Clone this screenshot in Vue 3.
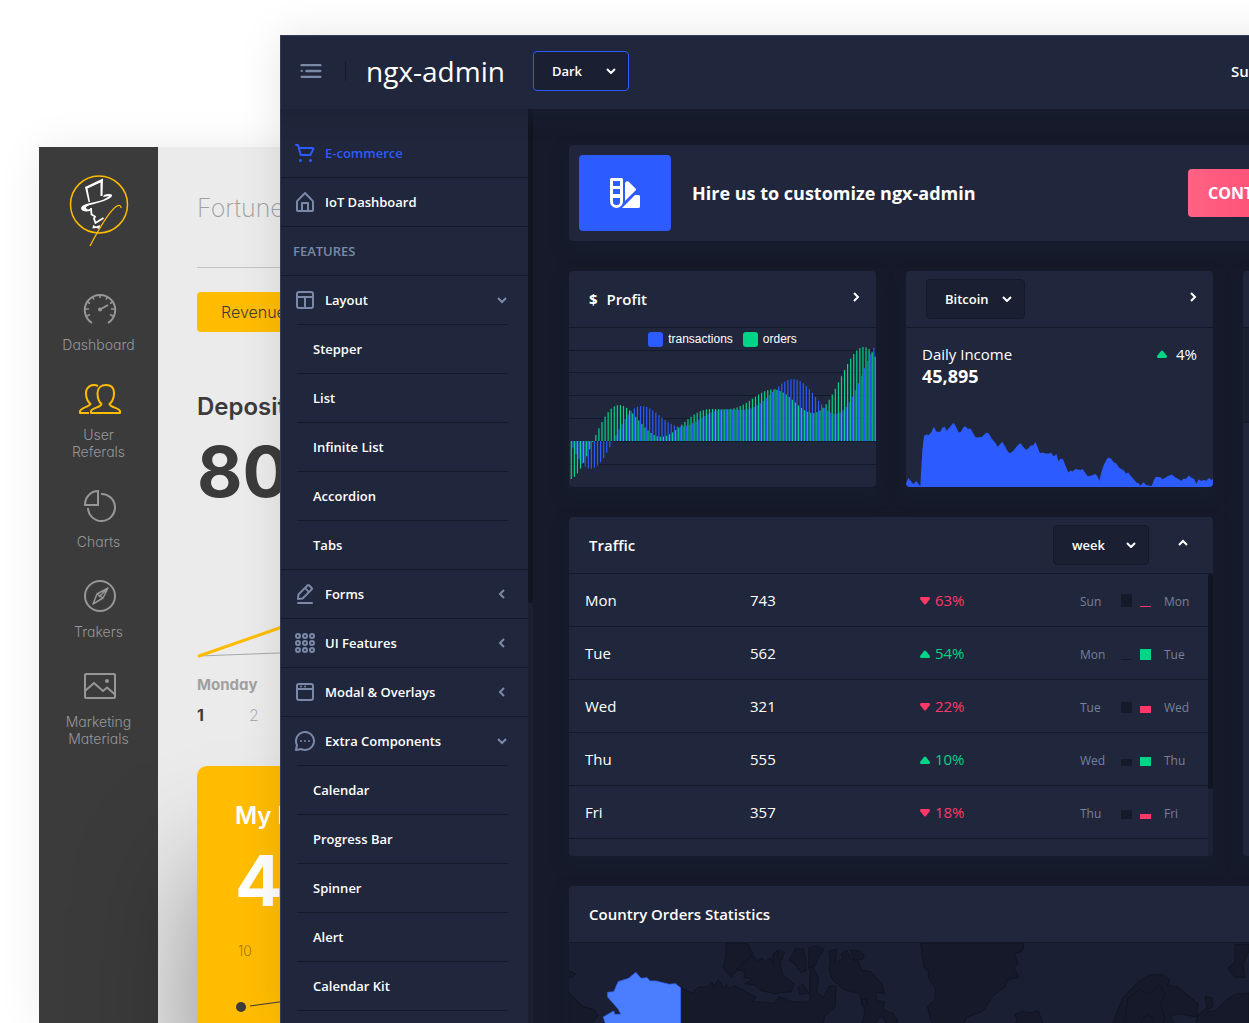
<script setup>
import { ref } from 'vue'

const theme = ref('Dark')
const currency = ref('Bitcoin')
const period = ref('week')

const menu = [
  { label: 'E-commerce', icon: 'cart', active: true },
  { label: 'IoT Dashboard', icon: 'home' },
  { label: 'FEATURES', group: true },
  { label: 'Layout', icon: 'layout', children: ['Stepper', 'List', 'Infinite List', 'Accordion', 'Tabs'] },
  { label: 'Forms', icon: 'edit', collapsed: true },
  { label: 'UI Features', icon: 'keypad', collapsed: true },
  { label: 'Modal & Overlays', icon: 'browser', collapsed: true },
  {
    label: 'Extra Components',
    icon: 'message',
    children: ['Calendar', 'Progress Bar', 'Spinner', 'Alert', 'Calendar Kit', 'Chat'],
  },
]

const traffic = [
  { day: 'Mon', value: 743, delta: 63, up: false, prev: 'Sun', a: 13, b: 1 },
  { day: 'Tue', value: 562, delta: 54, up: true, prev: 'Mon', a: 1, b: 11 },
  { day: 'Wed', value: 321, delta: 22, up: false, prev: 'Tue', a: 11, b: 7 },
  { day: 'Thu', value: 555, delta: 10, up: true, prev: 'Wed', a: 7, b: 9 },
  { day: 'Fri', value: 357, delta: 18, up: false, prev: 'Thu', a: 9, b: 5 },
]

const zero = 113
const unit = 0.76
const band = 3.07
const barWidth = 1.2
const wave = (fn, i) => (fn(i / 5) * (i / 5 - 10) + i / 6) * 5 * unit
const series = (fn, shift) =>
  Array.from({ length: 100 }, (_, i) => {
    const v = wave(fn, i)
    return { x: i * band + shift, y: v > 0 ? zero - v : zero, h: Math.abs(v) }
  })
const transactions = series(Math.sin, 0.3)
const orders = series(Math.cos, 1.7)
const gridLines = [22, 44, 67, 90, 113, 136]
</script>

<template>
  <div class="stage">
    <section class="back">
      <nav class="back-nav">
        <svg class="logo" width="60" height="72" viewBox="0 0 60 72" fill="none">
          <circle cx="30" cy="29.500" r="28.500" stroke="#ffbc00" stroke-width="1.500" />
          <path d="M16 12 34 3.500l-.5 17.500h-2V7.500L18.500 13.500 21 27h-1.500Z" fill="#fff" />
          <path d="M35 20c5-2 9-1 8 1-2 4-14 7-22 9-4 1-5 3-3 4 1 1 3 0 5-1l-2 3c-5 1-9 0-9-3 1-4 10-5 18-7 5-1 9-4 10-5-2 0-4 1-6 1Z" fill="#fff" />
          <path d="m22 33 .5 6.500 3.500 2-1 2 1.500 4.500 8-5" stroke="#fff" stroke-width="1.800" />
          <path d="m24 50 3 1.500 4-1.500-.5 4-3-1-4 .5Z" fill="#fff" />
          <path d="M21 71C33 48 43 34 48 31c2-1 4-1 4 2" stroke="#ffbc00" stroke-width="1.300" />
        </svg>
        <a class="back-item" href="#">
          <svg width="34" height="34" viewBox="0 0 34 34" fill="none" stroke="currentColor" stroke-width="2">
            <path d="M9 31A15.200 15.200 0 1 1 25 31" />
            <path d="M17 2v4M2 17h4M28 17h4M9.500 4.500l1.500 3M24.500 4.500l-1.500 3M4.500 10l2.500 1.500M29.500 10 27 11.500M4 24l3-1.500M30 24l-3-1.500" stroke-width="1.500" />
            <path d="m17 17.500 8-4.500" />
            <circle cx="17" cy="17.500" r="2" fill="currentColor" stroke="none" />
          </svg>
          <span>Dashboard</span>
        </a>
        <a class="back-item current" href="#">
          <svg width="42" height="34" viewBox="0 0 42 34" fill="none" stroke="currentColor" stroke-width="2" stroke-linejoin="round">
            <path d="M27 3c5 0 8 3 8 8 0 5-2 9-4.500 11 0 3 9.500 4 10.500 7v2H12v-2c1-3 10.500-4 10.500-7C20 20 18.500 16 18.500 11c0-5 3.500-8 8.500-8Z" />
            <path d="M19 4C13 1 7 5 7 11s2 9 4.500 11C11 24 2 26 1 29v2h9" />
          </svg>
          <span>User<br />Referals</span>
        </a>
        <a class="back-item" href="#">
          <svg width="34" height="34" viewBox="0 0 34 34" fill="none" stroke="currentColor" stroke-width="2">
            <path d="M18 5a13.500 13.500 0 1 1-13 14" />
            <path d="M15 2v14H2C2 8 8 2 15 2Z" />
          </svg>
          <span>Charts</span>
        </a>
        <a class="back-item" href="#">
          <svg width="34" height="34" viewBox="0 0 34 34" fill="none" stroke="currentColor" stroke-width="2" stroke-linejoin="round">
            <circle cx="17" cy="17" r="15" />
            <path d="m25 9-5 10-10 6 4-10ZM14 15l6 4M25 9 16 18" stroke-width="1.500" />
          </svg>
          <span>Trakers</span>
        </a>
        <a class="back-item" href="#">
          <svg width="34" height="34" viewBox="0 0 34 34" fill="none" stroke="currentColor" stroke-width="2">
            <rect x="2" y="5" width="30" height="24" rx="1" />
            <path d="m2 22 9-8 9 8 4-3.500 8 7" />
            <circle cx="24" cy="12" r="2" fill="currentColor" stroke="none" />
          </svg>
          <span>Marketing<br />Materials</span>
        </a>
      </nav>
      <main class="back-main">
        <h1>Fortune</h1>
        <button class="revenue" type="button">Revenue</button>
        <h2>Deposit</h2>
        <p class="figure">80</p>
        <svg class="trend" width="400" height="40" viewBox="0 0 400 40" fill="none">
          <path d="M2 37 400 22" stroke="#a8a8a8" />
          <path d="m2 37 86-30" stroke="#ffbc00" stroke-width="3" stroke-linecap="round" />
        </svg>
        <p class="weekday">Monday</p>
        <ol class="dates">
          <li class="today">1</li>
          <li>2</li>
        </ol>
        <article class="yellow">
          <h2>My Profit</h2>
          <p class="figure">4</p>
          <p class="tick">10</p>
          <svg width="200" height="30" viewBox="0 0 200 30">
            <circle cx="6" cy="16" r="5" fill="#3b3b3b" />
            <path d="m15 15 80-11" stroke="#3b3b3b" />
          </svg>
        </article>
      </main>
    </section>

    <section class="front">
      <header class="topbar">
        <button class="toggle" type="button" aria-label="Toggle menu">
          <svg width="28" height="28" viewBox="0 0 24 24" fill="currentColor">
            <circle cx="4" cy="12" r="1" />
            <rect x="7" y="11" width="14" height="2" rx="1" />
            <rect x="3" y="16" width="18" height="2" rx="1" />
            <rect x="3" y="6" width="18" height="2" rx="1" />
          </svg>
        </button>
        <a class="brand" href="#">ngx-admin</a>
        <label class="select outlined">
          <select v-model="theme" aria-label="Theme">
            <option>Dark</option>
            <option>Light</option>
          </select>
          <svg width="10" height="6" viewBox="0 0 10 6"><path d="m1 1 4 4 4-4" /></svg>
        </label>
        <a class="support" href="#">Support</a>
      </header>

      <div class="body">
        <nav class="sidebar">
          <ul class="menu">
            <li v-for="item in menu" :key="item.label">
              <div v-if="item.group" class="group">{{ item.label }}</div>
              <a v-else class="row" :class="{ active: item.active }" href="#">
                <svg class="icon" width="24" height="24" viewBox="0 0 24 24" fill="currentColor">
                  <template v-if="item.icon === 'cart'">
                    <path d="M21.080 7a2 2 0 0 0-1.700-1H6.580L6 3.740A1 1 0 0 0 5 3H3a1 1 0 0 0 0 2h1.240l2.490 9.260A1 1 0 0 0 7.690 15h9.620a1 1 0 0 0 .89-.55l3.280-6.560A1.640 1.640 0 0 0 21.080 7zm-4.390 6H8.450L7.100 8h12.160z" />
                    <circle cx="7.500" cy="19.500" r="1.500" />
                    <circle cx="17.500" cy="19.500" r="1.500" />
                  </template>
                  <path v-else-if="item.icon === 'home'" d="M20.420 10.180 12.710 2.300a1 1 0 0 0-1.420 0l-7.710 7.890A2 2 0 0 0 3 11.620V20a2 2 0 0 0 1.890 2h14.220A2 2 0 0 0 21 20v-8.380a2.070 2.070 0 0 0-.58-1.440zM10 20v-6h4v6zm9 0h-3v-7a1 1 0 0 0-1-1H9a1 1 0 0 0-1 1v7H5v-8.420l7-7.150 7 7.190z" />
                  <path v-else-if="item.icon === 'layout'" d="M18 3H6a3 3 0 0 0-3 3v12a3 3 0 0 0 3 3h12a3 3 0 0 0 3-3V6a3 3 0 0 0-3-3zM6 5h12a1 1 0 0 1 1 1v2H5V6a1 1 0 0 1 1-1zM5 18v-8h6v9H6a1 1 0 0 1-1-1zm14 0a1 1 0 0 1-1 1h-5v-9h6z" />
                  <template v-else-if="item.icon === 'edit'">
                    <path d="M19 20H5a1 1 0 0 0 0 2h14a1 1 0 0 0 0-2z" />
                    <path d="M5 18h.09l4.170-.38a2 2 0 0 0 1.210-.57l9-9a1.920 1.920 0 0 0-.07-2.710L16.660 2.600A2 2 0 0 0 14 2.530l-9 9a2 2 0 0 0-.57 1.210L4 16.910A1 1 0 0 0 5 18zM15.270 4 18 6.730l-2 1.950L13.320 6zm-8.900 8.910L12 7.320l2.700 2.700-5.600 5.600-3 .28z" />
                  </template>
                  <g v-else-if="item.icon === 'keypad'" fill="none" stroke="currentColor" stroke-width="2">
                    <template v-for="cy in [5, 12, 19]" :key="cy">
                      <circle v-for="cx in [5, 12, 19]" :key="cx" :cx="cx" :cy="cy" r="2" />
                    </template>
                  </g>
                  <template v-else-if="item.icon === 'browser'">
                    <path d="M18 3H6a3 3 0 0 0-3 3v12a3 3 0 0 0 3 3h12a3 3 0 0 0 3-3V6a3 3 0 0 0-3-3zM6 5h12a1 1 0 0 1 1 1v2H5V6a1 1 0 0 1 1-1zm12 14H6a1 1 0 0 1-1-1v-8h14v8a1 1 0 0 1-1 1z" />
                    <circle cx="8" cy="6.500" r="1" />
                    <circle cx="12" cy="6.500" r="1" />
                  </template>
                  <template v-else>
                    <circle cx="8" cy="12" r="1" />
                    <circle cx="12" cy="12" r="1" />
                    <circle cx="16" cy="12" r="1" />
                    <path d="M19.070 4.930a10 10 0 0 0-16.280 11 1.060 1.060 0 0 1 .09.64L2 20.800a1 1 0 0 0 .27.91A1 1 0 0 0 3 22h.2l4.280-.86a1.260 1.260 0 0 1 .64.09 10 10 0 0 0 10.950-16.300zm.83 8.360a8 8 0 0 1-11 6.080 3.260 3.260 0 0 0-1.250-.26 3.430 3.430 0 0 0-.56.05l-2.820.57.57-2.820a3.090 3.090 0 0 0-.21-1.810 8 8 0 1 1 15.270-1.810z" />
                  </template>
                </svg>
                <span>{{ item.label }}</span>
                <svg v-if="item.children" class="chevron" width="10" height="10" viewBox="0 0 10 10"><path d="m1 3 4 4 4-4" /></svg>
                <svg v-else-if="item.collapsed" class="chevron" width="10" height="10" viewBox="0 0 10 10"><path d="M7 1 3 5l4 4" /></svg>
              </a>
              <ul v-if="item.children" class="sub">
                <li v-for="child in item.children" :key="child"><a href="#">{{ child }}</a></li>
              </ul>
            </li>
          </ul>
        </nav>
        <div class="track"><div class="thumb"></div></div>

        <main class="content">
          <article class="card banner">
            <div class="swatch">
              <svg width="30" height="30" viewBox="0 0 30 30" fill="#fff" fill-rule="evenodd">
                <path d="M1.500 0h10A1.500 1.500 0 0 1 13 1.500v22a6.500 6.500 0 0 1-13 0v-22A1.500 1.500 0 0 1 1.500 0ZM3 3v5h7V3Zm0 8v5h7v-5Zm0 9v4a3 3 0 0 0 3 3h1a3 3 0 0 0 3-3v-4Z" />
                <path d="M15 5c1-2 3-2 4-1l7 7c0 1 0 1-1 2L15 23Z" />
                <path d="m12 30 12-12 1-1h4l1 1v11l-1 1Z" />
              </svg>
            </div>
            <h2>Hire us to customize ngx-admin</h2>
            <button class="contact" type="button">CONTACT US</button>
          </article>

          <article class="card profit">
            <header>
              <h3><span class="dollar">$</span>Profit</h3>
              <button class="flip" type="button" aria-label="Flip profit card">
                <svg width="10" height="10" viewBox="0 0 10 10"><path d="m3 1 4 4-4 4" /></svg>
              </button>
            </header>
            <div class="chart">
              <svg viewBox="0 0 307 159" preserveAspectRatio="none">
                <path v-for="y in gridLines" :key="y" :d="`M0 ${y}.500H307`" stroke="#151a2b" />
                <rect v-for="(b, i) in transactions" :key="'t' + i" :x="b.x" :y="b.y" :width="barWidth" :height="b.h" fill="#2c5bff" />
                <rect v-for="(b, i) in orders" :key="'o' + i" :x="b.x" :y="b.y" :width="barWidth" :height="b.h" fill="#00d486" />
              </svg>
              <div class="legend">
                <span><i class="blue"></i>transactions</span>
                <span><i class="green"></i>orders</span>
              </div>
            </div>
          </article>

          <article class="card income">
            <header>
              <label class="select">
                <select v-model="currency" aria-label="Currency">
                  <option>Bitcoin</option>
                  <option>Tether</option>
                </select>
                <svg width="10" height="6" viewBox="0 0 10 6"><path d="m1 1 4 4 4-4" /></svg>
              </label>
              <button class="flip" type="button" aria-label="Flip income card">
                <svg width="10" height="10" viewBox="0 0 10 10"><path d="m3 1 4 4-4 4" /></svg>
              </button>
            </header>
            <div class="summary">
              <div>
                <p>Daily Income</p>
                <strong>45,895</strong>
              </div>
              <p class="change">
                <svg width="10" height="8" viewBox="0 0 10 8"><path d="M4 1q1-1 2 0l4 5q0 2-1 2H1Q0 8 0 6Z" fill="#00d486" /></svg>
                4%
              </p>
            </div>
            <svg class="area" viewBox="48 870 921 200" preserveAspectRatio="none">
              <polygon
                fill="#2c5bff"
                points="48,1060 55,1043 63,1053 70,1061 79,1052 85,1060 91,1068 94,1010 97,960 102,917 110,913 116,915 125,905 131,890 140,905 151,905 157,893 164,890 170,902 178,893 190,878 197,888 206,907 213,905 220,892 226,889 233,896 242,896 250,910 257,922 275,921 283,913 290,907 297,911 305,925 316,938 323,950 337,935 345,948 353,963 360,969 370,962 382,947 391,939 399,949 408,959 415,955 421,947 430,945 436,936 442,949 450,969 458,967 468,970 478,970 483,967 489,977 495,977 499,970 505,993 512,986 519,987 526,1005 535,1027 541,1021 548,1024 556,1016 563,1018 571,1019 578,1016 585,1027 593,1038 605,1036 616,1031 622,1037 628,1051 634,1025 641,1005 650,987 656,982 663,985 671,996 678,999 687,1012 695,1017 702,1021 708,1030 715,1027 723,1038 733,1049 740,1057 745,1058 752,1066 760,1055 768,1064 785,1067 792,1048 797,1040 805,1040 812,1041 817,1047 824,1043 834,1037 846,1033 854,1040 865,1046 874,1051 880,1045 889,1045 896,1036 905,1043 912,1045 919,1060 926,1047 933,1051 943,1049 949,1051 957,1043 964,1049 969,1046 969,1070 48,1070"
              />
            </svg>
          </article>

          <article class="card side">
            <header></header>
            <div class="side-tabs"></div>
          </article>

          <article class="card traffic">
            <header>
              <h3>Traffic</h3>
              <label class="select">
                <select v-model="period" aria-label="Period">
                  <option>week</option>
                  <option>month</option>
                  <option>year</option>
                </select>
                <svg width="10" height="6" viewBox="0 0 10 6"><path d="m1 1 4 4 4-4" /></svg>
              </label>
              <button class="flip" type="button" aria-label="Reveal chart">
                <svg width="10" height="10" viewBox="0 0 10 10"><path d="m1 7 4-4 4 4" /></svg>
              </button>
            </header>
            <div class="scroll">
              <table>
                <tbody>
                  <tr v-for="r in traffic" :key="r.day">
                    <td class="day">{{ r.day }}</td>
                    <td class="value">{{ r.value }}</td>
                    <td class="delta" :class="r.up ? 'up' : 'down'">
                      <svg width="10" height="8" viewBox="0 0 10 8" fill="currentColor">
                        <path v-if="r.up" d="M4 1q1-1 2 0l4 5q0 2-1 2H1Q0 8 0 6Z" />
                        <path v-else d="M4 7q1 1 2 0l4-5q0-2-1-2H1Q0 0 0 2Z" />
                      </svg>
                      {{ r.delta }}%
                    </td>
                    <td>
                      <div class="compare">
                        <span class="prev">{{ r.prev }}</span>
                        <i class="bar" :style="{ height: r.a + 'px' }"></i>
                        <i class="bar" :class="r.up ? 'bar-up' : 'bar-down'" :style="{ height: r.b + 'px' }"></i>
                        <span class="next">{{ r.day }}</span>
                      </div>
                    </td>
                  </tr>
                </tbody>
              </table>
              <div class="table-track"><div class="table-thumb"></div></div>
            </div>
          </article>

          <article class="card country">
            <header><h3>Country Orders Statistics</h3></header>
            <svg class="map" width="680" height="81" viewBox="0 0 680 81">
              <g transform="scale(.4393 .3333) translate(-20 -216)" fill="#161929" stroke="#10131f" stroke-width="2">
                <path d="M378 216h48l12 30-15 30-10 22-10 0-14 20-18-28 6-40Z" />
                <path d="M438 250l10 20 12-8 6 12 12-14 8 20-2-30 10-12 10 14-4 20 6 38 26 28-6 24-40 6-30-10-14-16-22-4 18-14-20-4 4-16-20-10Z" />
                <path d="M494 242l8-6 8 8-6 24-8-8ZM534 234h20l4 24 2 40-12 8-14-28-14-10 8-16ZM566 230l16-6 18 10-12 26-8 24-14 8ZM542 352l10-14 14 28-20 4ZM660 238h18l14 14-2 12-20 4Z" />
                <path d="M612 240l18-6-4 40 18-10-4-16 12-10 12 26 14 8 10 26 20 4 24 38 6 28-20-4 2 22 18 8-4 20 24 14 10 20-12 30-14-20-10-26-12 20-10 26h-26l10-60-14-50-34-12-24-26-10-30 2-30Z" />
                <path d="M274 350l26 16 14-18h22l10-14 4 12 10-20 14 28 4-14 8 14 10-10 50 34-8 14 50 4 10-20 30 16 40 2V290l8-2 12 34-4 40 14 18 16-36 14 2-2 60-24 30-4 30H274Z" />
                <path d="M820 216h236l-4 24-18 8 8 30-8 12 10 30-26 6-4 20-30 30-22 46-36 16-8 22h-72l-10-52 16-20 2-36-16-30v-20l-10-14Z" />
                <path d="M1034 430l20-10 12 6 22-6 10 30-4 16h-60l6-20Z" />
                <path d="M1256 462l24-80 36-50 26-20 30-2 16 18-6 16 24 4 46 50-4 40-40-10-18 8 10 28Z" />
                <path d="M1284 462l8-80 28-26 20 14 24-30 12 30-10 30 10 40-6 24M1322 462l4-20 14-10 10 12-2 18" fill="none" />
                <path d="M1536 220h32v20l-14 40 4 40-24-2-14-26 16-20ZM1568 366l-34 4-20 20-20 28-22 6 14-20-2-24-16-4 4 36-20 18-6 34h122Z" />
                <path d="M20 366l32 40 26 10 8 20-20 26H20ZM20 300l16 8-8 10h-8ZM686 384l10 0 4 14-8 10-6-6Z" />
                <path d="M148 462H104l-6-24 24-18 2 10h14l-6-16-24-36v-14l14-2 10-30 24-10 16-18 12 18 14-2 6 10h14l30 10 14-2 12 12v112Z" fill="#4b7eff" stroke="#3766ff" />
              </g>
            </svg>
          </article>
        </main>
      </div>
    </section>
  </div>
</template>

<style>
body {
  background: #fff;
}
</style>

<style scoped>
.stage {
  position: relative;
  height: 100vh;
  overflow: hidden;
  font-family: "Open Sans", sans-serif;
  color: #fff;
}
.stage * {
  box-sizing: border-box;
}
h1, h2, h3, p, ul, ol {
  margin: 0;
  padding: 0;
  list-style: none;
}
a {
  color: inherit;
  text-decoration: none;
}
button {
  border: 0;
  padding: 0;
  background: none;
  color: inherit;
  font: inherit;
}

/* back window */
.back {
  position: absolute;
  top: 147px;
  left: 39px;
  right: 200px;
  bottom: 0;
  display: flex;
  background: #ebebeb;
  box-shadow: 0 0 40px rgba(0, 0, 0, 0.08);
  font-family: Inter, sans-serif;
  font-feature-settings: "cv11";
}
.back-nav {
  display: flex;
  flex-direction: column;
  align-items: center;
  gap: 29px;
  width: 119px;
  padding-top: 28px;
  background: #3b3b3b;
}
.logo {
  margin-bottom: 16px;
}
.back-item {
  display: flex;
  flex-direction: column;
  align-items: center;
  gap: 10px;
  color: #979797;
  font-size: 14px;
  font-weight: 300;
  line-height: 17px;
  text-align: center;
}
.back-item svg {
  margin-left: 3px;
}
.current svg {
  color: #ffbc00;
}
.back-main {
  display: flex;
  flex-direction: column;
  flex: 1;
  padding: 40px 0 0 39px;
  color: #3b3b3b;
}
.back-main > * {
  flex-shrink: 0;
}
h1 {
  margin-bottom: 24px;
  padding-bottom: 38px;
  border-bottom: 1px solid #c3c3c3;
  color: #a0a0a0;
  font-size: 25px;
  font-weight: 200;
  line-height: 42px;
}
.revenue {
  align-self: flex-start;
  height: 40px;
  padding: 0 24px;
  border-radius: 4px;
  background: #ffbc00;
  font-size: 16px;
  font-weight: 300;
}
.back h2 {
  font-size: 24px;
  font-weight: 600;
  line-height: 30px;
}
.back-main > h2 {
  margin-top: 60px;
}
.figure {
  margin-top: 10px;
  font-size: 70px;
  font-weight: 700;
  line-height: 80px;
}
.trend {
  margin-top: 107px;
}
.weekday {
  margin-top: 16px;
  color: #a0a0a0;
  font-size: 15px;
  font-weight: 700;
  line-height: 20px;
}
.dates {
  display: flex;
  margin-top: 10px;
  color: #a0a0a0;
  font-size: 16px;
  font-weight: 200;
  line-height: 20px;
}
.dates li {
  width: 52px;
}
.dates .today {
  color: #3b3b3b;
  font-weight: 700;
}
.yellow {
  flex: 1 0 auto;
  margin-top: 41px;
  padding: 35px 38px 0;
  border-radius: 10px 0 0 0;
  background: #ffbc00;
  box-shadow: 0 100px 120px rgba(0, 0, 0, 0.4);
}
.yellow h2,
.yellow .figure {
  color: #fff;
}
.yellow .tick {
  margin: 20px 0 30px 3px;
  color: #7a5f1c;
  font-size: 14px;
  font-weight: 200;
  line-height: 20px;
}

/* front window */
.front {
  position: absolute;
  top: 35px;
  left: 280px;
  right: -337px;
  bottom: 0;
  display: flex;
  flex-direction: column;
  overflow: hidden;
  background: #161a2a;
  box-shadow: 0 0 40px rgba(0, 0, 0, 0.1);
}
.topbar {
  position: relative;
  z-index: 1;
  display: flex;
  flex: none;
  align-items: center;
  height: 74px;
  padding: 0 300px 3px 16px;
  border-top: 1px solid #353c54;
  border-left: 1px solid #353c54;
  background: #20263b;
  box-shadow: 0 8px 16px rgba(26, 31, 51, 0.6);
}
.toggle {
  display: flex;
  color: #7b89a8;
}
.brand {
  display: flex;
  align-items: center;
  margin: 0 28px 0 20px;
  font-size: 28px;
  line-height: 40px;
}
.brand::before {
  content: "";
  height: 20px;
  margin-right: 20px;
  border-left: 1px solid #151a2b;
}
.support {
  margin-left: auto;
  font-size: 15px;
  font-weight: 600;
  width: 55px;
}
.select {
  position: relative;
  display: flex;
  align-items: center;
}
.select select {
  width: 96px;
  height: 40px;
  padding: 0 30px 0 18px;
  border: 1px solid #151a2b;
  border-radius: 4px;
  background: #1a1f32;
  color: #fff;
  font: 600 13px "Open Sans", sans-serif;
  appearance: none;
}
.income .select select {
  width: 99px;
}
.select.outlined select {
  border-color: #2c5bff;
}
.select svg {
  position: absolute;
  right: 13px;
  pointer-events: none;
}
.select path,
.flip path,
.chevron path {
  fill: none;
  stroke: currentColor;
  stroke-width: 2;
}
.body {
  display: flex;
  flex: 1;
  min-height: 0;
}
.sidebar {
  flex: none;
  width: 248px;
  overflow: hidden;
  padding-top: 20px;
  border-left: 1px solid #353c54;
  background: #20263b;
  font-size: 13px;
  font-weight: 600;
  line-height: 18px;
}
.menu > li {
  border-bottom: 1px solid #151a2b;
}
.row,
.group {
  display: flex;
  align-items: center;
  height: 48px;
  padding: 0 21px 0 12px;
}
.group {
  color: #7b89a8;
}
.icon {
  margin-right: 8px;
  color: #7b89a8;
}
.active,
.active .icon {
  color: #2c5bff;
}
.chevron {
  margin-left: auto;
  color: #7b89a8;
}
.sub {
  margin: 0 20px 0 16px;
}
.sub li {
  border-top: 1px solid #151a2b;
}
.sub a {
  display: flex;
  align-items: center;
  height: 48px;
  padding-left: 16px;
}
.track {
  flex: none;
  width: 5px;
  background: #1a1f32;
}
.thumb {
  height: 54%;
  border-radius: 0 0 3px 3px;
  background: #111522;
}
.content {
  display: grid;
  flex: 1;
  grid-template-columns: repeat(3, 1fr);
  grid-template-rows: auto auto auto 1fr;
  gap: 30px;
  min-width: 0;
  padding: 36px 36px 0;
}
.card {
  display: flex;
  flex-direction: column;
  min-width: 0;
  overflow: hidden;
  border-radius: 4px;
  background: #20263b;
  box-shadow: 0 8px 16px rgba(26, 31, 51, 0.5);
}
.card > header {
  display: flex;
  flex: none;
  align-items: center;
  height: 57px;
  padding: 0 15px 0 20px;
  border-bottom: 1px solid #151a2b;
}
h3 {
  font-size: 15px;
  font-weight: 600;
}
.dollar {
  margin-right: 9px;
  font-weight: 700;
}
.flip {
  display: flex;
  margin: 0 0 4px auto;
}
.banner {
  grid-column: 1 / -1;
  flex-direction: row;
  align-items: center;
  padding: 10px 200px 10px 10px;
}
.swatch {
  display: flex;
  align-items: center;
  justify-content: center;
  width: 92px;
  height: 76px;
  margin-right: 21px;
  border-radius: 4px;
  background: #2c5bff;
}
.banner h2 {
  font-size: 18px;
  font-weight: 700;
}
.contact {
  width: 162px;
  height: 48px;
  margin-left: auto;
  padding-left: 20px;
  border-radius: 4px;
  background: linear-gradient(90deg, #ff6384, #ff386a);
  font-size: 16px;
  font-weight: 700;
  text-align: left;
}
.chart {
  display: grid;
}
.chart > * {
  grid-area: 1 / 1;
}
.chart svg {
  width: 100%;
  height: 159px;
}
.legend {
  display: flex;
  gap: 10px;
  align-self: start;
  justify-content: center;
  padding-top: 4px;
  font: 12px/15px "Liberation Sans", sans-serif;
}
.legend span {
  display: flex;
  gap: 5px;
}
.legend i {
  width: 15px;
  height: 15px;
  border-radius: 3px;
}
.blue {
  background: #2c5bff;
}
.green {
  background: #00d486;
}
.summary {
  display: flex;
  justify-content: space-between;
  padding: 15px 16px 0;
  font-size: 15px;
  line-height: 22px;
}
.summary strong {
  display: block;
  font-size: 18px;
}
.change {
  display: flex;
  gap: 9px;
}
.change svg {
  margin-top: 7px;
}
.area {
  width: 100%;
  height: 67px;
  margin-top: auto;
}
.side {
  grid-row: 2 / 4;
  grid-column: 3;
}
.side-tabs {
  height: 95px;
  border-bottom: 1px solid #151a2b;
  background: #1a1f32;
}
.traffic {
  grid-column: 1 / 3;
}
.traffic .select {
  margin-left: auto;
}
.traffic .flip {
  margin-left: 29px;
  margin-right: 10px;
}
.scroll {
  display: flex;
  height: 282px;
}
table {
  flex: 1;
  align-self: flex-start;
  border-spacing: 0;
  table-layout: fixed;
  font-size: 15px;
}
td {
  height: 53px;
  padding: 0 16px;
  border-bottom: 1px solid #151a2b;
}
.day {
  width: 165px;
}
.value {
  width: 170px;
}
.delta {
  width: 160px;
}
.delta svg {
  margin-right: 1px;
  vertical-align: 1px;
}
.up {
  color: #00d486;
}
.down {
  color: #ff3867;
}
.compare {
  display: flex;
  align-items: flex-end;
  height: 14px;
  color: #76809c;
  font-size: 12px;
  line-height: 10px;
}
.prev {
  width: 41px;
}
.bar {
  width: 11px;
  margin-right: 8px;
  background: #151a2b;
}
.bar-up {
  background: #00d486;
}
.bar-down {
  background: #ff3867;
}
.next {
  margin-left: 5px;
}
.table-track {
  width: 5px;
  background: #1c2135;
}
.table-thumb {
  height: 215px;
  border-radius: 3px;
  background: #111522;
}
.country {
  grid-column: 1 / -1;
  border-radius: 4px 4px 0 0;
  background: #1a1f33;
}
.country > header {
  background: #20263b;
}
.map {
  flex: none;
}
</style>
